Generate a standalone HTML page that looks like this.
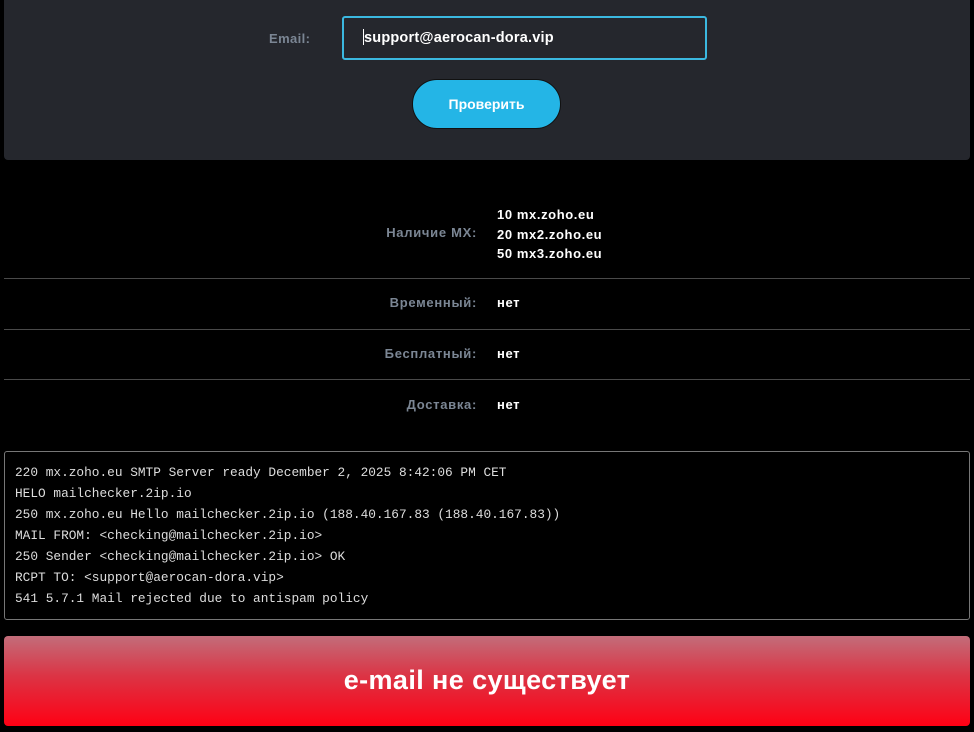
<!DOCTYPE html>
<html><head><meta charset="utf-8"><style>
*{margin:0;padding:0;box-sizing:border-box}
body{width:974px;height:732px;background:#000;font-family:"Liberation Sans",sans-serif;position:relative;overflow:hidden}
.top{position:absolute;left:4px;top:0;width:966px;height:160px;background:#25272d;border-radius:0 0 4px 4px}
.lbl{position:absolute;left:269px;top:31px;color:#7b8694;font-size:13px;font-weight:bold;letter-spacing:0.4px}
.inp{position:absolute;left:342px;top:16px;width:365px;height:44px;border:2px solid #3bb8e0;border-radius:3px;background:#25272d;color:#fff;font-size:14.5px;font-weight:bold;padding:11px 0 0 19px;letter-spacing:0.2px}
.inp i{display:inline-block;width:1px;height:16px;background:#fff;vertical-align:-3px}
.btn{position:absolute;left:412px;top:79px;width:149px;height:50px;border-radius:25px;background:#24b5e6;border:1px solid #111;color:#fff;font-size:14px;font-weight:bold;text-align:center;line-height:48px}
.row{position:absolute;left:4px;width:966px}
.row .k{position:absolute;right:493px;color:#7b8694;font-size:13px;font-weight:bold;white-space:nowrap;letter-spacing:0.7px}
.row .v{position:absolute;left:493px;color:#fff;font-size:13px;font-weight:bold;white-space:nowrap;line-height:19.5px;letter-spacing:0.6px}
.hr{position:absolute;left:4px;width:966px;height:1px;background:#4a4a4a}
.log{position:absolute;left:4px;top:451px;width:966px;height:169px;border:1px solid #777;border-radius:3px;padding:10px 0 0 10px;font-family:"Liberation Mono",monospace;font-size:12.8px;line-height:21px;color:#ddd;white-space:pre}
.res{position:absolute;left:4px;top:636px;width:966px;height:90px;border-radius:4px;background:linear-gradient(#c26d7a,#dc3344 45%,#ff0014);color:#fff;font-size:27px;font-weight:bold;text-align:center;line-height:88px;letter-spacing:0.4px}
</style></head><body>
<div class="top"></div>
<div class="lbl">Email:</div>
<div class="inp"><i></i>support@aerocan-dora.vip</div>
<div class="btn">Проверить</div>
<div class="row" style="top:205px"><div class="k" style="top:20px">Наличие MX:</div><div class="v">10 mx.zoho.eu<br>20 mx2.zoho.eu<br>50 mx3.zoho.eu</div></div>
<div class="hr" style="top:278px"></div>
<div class="row" style="top:295px"><div class="k">Временный:</div><div class="v" style="top:-2px">нет</div></div>
<div class="hr" style="top:329px"></div>
<div class="row" style="top:346px"><div class="k">Бесплатный:</div><div class="v" style="top:-2px">нет</div></div>
<div class="hr" style="top:379px"></div>
<div class="row" style="top:397px"><div class="k">Доставка:</div><div class="v" style="top:-2px">нет</div></div>
<div class="log">220 mx.zoho.eu SMTP Server ready December 2, 2025 8:42:06 PM CET
HELO mailchecker.2ip.io
250 mx.zoho.eu Hello mailchecker.2ip.io (188.40.167.83 (188.40.167.83))
MAIL FROM: &lt;checking@mailchecker.2ip.io&gt;
250 Sender &lt;checking@mailchecker.2ip.io&gt; OK
RCPT TO: &lt;support@aerocan-dora.vip&gt;
541 5.7.1 Mail rejected due to antispam policy</div>
<div class="res">e-mail не существует</div>
</body></html>
